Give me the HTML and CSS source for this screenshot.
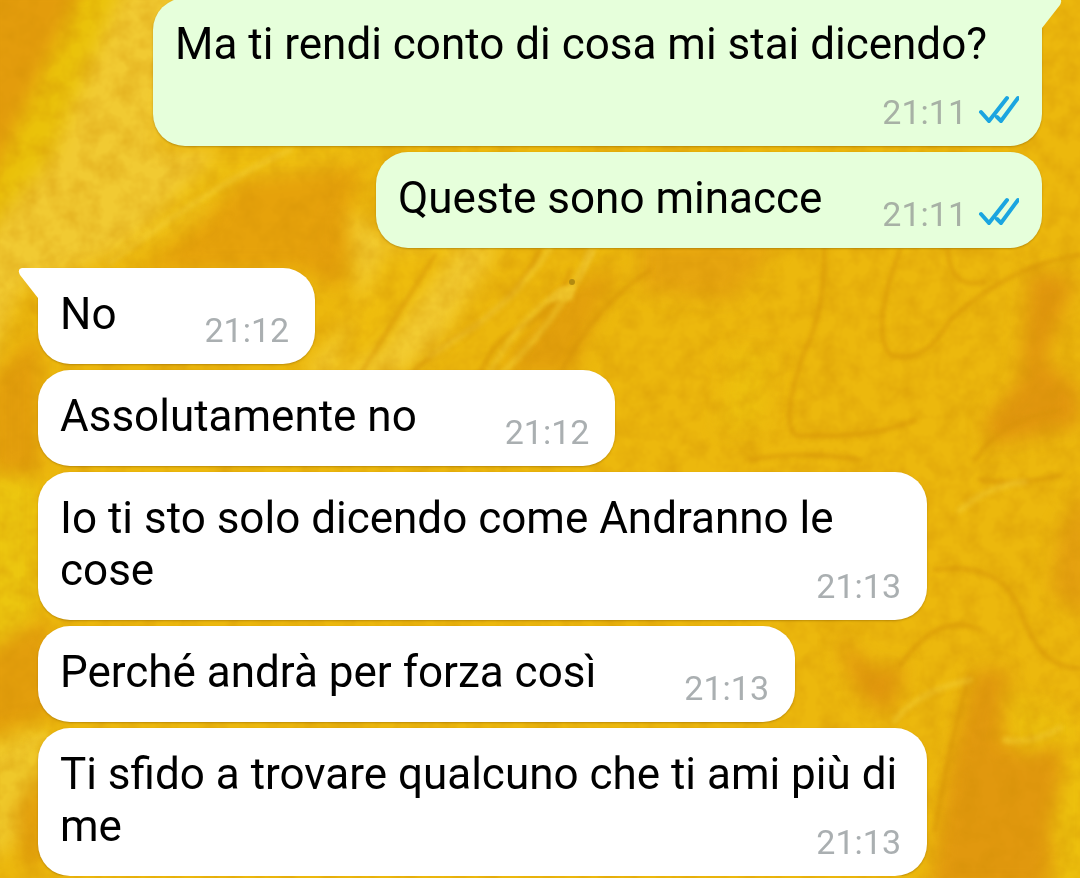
FILE: index.html
```html
<!DOCTYPE html>
<html lang="it">
<head>
    <meta charset="UTF-8">
    <meta name="viewport" content="width=device-width, initial-scale=1.0">
    <title>Chat</title>
    <link rel="stylesheet" href="styles.css">
</head>
<body>
    <!-- Marbled paint wallpaper -->
    <svg class="wallpaper" viewBox="0 0 1080 878" preserveAspectRatio="xMidYMid slice" aria-hidden="true">
        <defs>
            <filter id="soft" x="-20%" y="-20%" width="140%" height="140%" color-interpolation-filters="sRGB">
                <feGaussianBlur stdDeviation="9"/>
            </filter>
            <filter id="vein" x="-20%" y="-20%" width="140%" height="140%" color-interpolation-filters="sRGB">
                <feGaussianBlur stdDeviation="2"/>
            </filter>
            <filter id="grain" color-interpolation-filters="sRGB">
                <feTurbulence type="fractalNoise" baseFrequency="0.05" numOctaves="3" seed="4"/>
                <feColorMatrix values="0 0 0 0 0.82  0 0 0 0 0.56  0 0 0 0 0.02  0.7 0 0 0 -0.24"/>
            </filter>
        </defs>
        <rect width="1080" height="878" fill="#ecb80d"/>
        <g filter="url(#soft)">
            <path fill="#e39c0c" d="M-20 -20H80L75 60L40 150L-20 210Z"/>
            <path fill="#eac20a" d="M85 -20H150L60 150L-20 250V205Z"/>
            <path fill="#f1ca32" d="M125 -20H180L160 150H300L150 240L20 290L-20 390V240L50 160Z"/>
            <path fill="#eec010" d="M220 150H380L330 175L200 205L110 262L150 225Z"/>
            <path fill="#e6a20b" d="M360 165L240 180L200 225L140 270H330L350 210Z"/>
            <path fill="#f2cb31" d="M350 210L390 240L500 245L440 340L400 375L300 375L360 310Z"/>
            <path fill="#eebc0d" d="M385 250L460 245L380 350L330 375Z"/>
            <path fill="#e49f0b" d="M305 270L340 290L350 240L330 190Z"/>
            <path fill="#e3a00c" d="M560 290L620 265L570 375L500 375Z"/>
            <path fill="#e6a50f" d="M640 240H780L730 300L640 290Z"/>
            <path fill="#e39e0c" d="M-10 380L40 330V470L-10 480Z"/>
            <path fill="#ecc60f" d="M-20 470L40 480V620L-20 680Z"/>
            <path fill="#e39e0c" d="M-20 655L45 615L60 710L-20 740Z"/>
            <path fill="#efc82a" d="M-20 745L45 728V780L10 850L-20 860Z"/>
            <path fill="#e39e0c" d="M15 810L45 770V860L25 870Z"/>
            <path fill="#ecbf0d" d="M730 350H775L760 430H720Z"/>
            <path fill="#e1960e" d="M1030 270L1075 280L1045 360L1080 390V425L990 445L985 420L1020 380Z"/>
            <path fill="#e4a010" d="M1060 530L1090 480V620L1050 590Z"/>
            <path fill="#e1960e" d="M835 635L875 670L905 665L890 715L860 695Z"/>
            <path fill="#e1980e" d="M975 670L1010 670L1000 745L1060 740L1065 810L1045 890H930L950 760Z"/>
            <path fill="#ecc00d" d="M1000 690L1080 720V740L1020 755Z"/>
            <path fill="#ecc00d" d="M1068 750H1090V890H1060L1050 830Z"/>
        </g>
        <g fill="none" filter="url(#vein)" stroke-linecap="round">
            <g stroke="#d59108" stroke-width="4" opacity="0.6">
                <path d="M435 255Q400 310 360 375"/>
                <path d="M540 250Q510 310 450 340Q420 365 410 375"/>
                <path d="M570 270Q560 310 515 330Q490 345 480 375"/>
                <path d="M650 270Q590 310 560 375"/>
                <path d="M824 240Q826 310 805 350Q780 420 795 435Q870 440 915 420"/>
                <path d="M900 250Q870 330 890 355Q925 365 950 320Q1010 265 1080 255"/>
                <path d="M948 250Q950 290 985 282"/>
                <path d="M750 460Q800 450 860 460"/>
                <path d="M980 480Q1030 485 1060 475"/>
                <path d="M935 570Q1000 560 1020 610Q1040 670 1080 668"/>
                <path d="M900 665Q940 610 980 630"/>
                <path d="M970 675Q950 740 935 830"/>
                <path d="M1060 410Q1000 420 975 460"/>
            </g>
            <g stroke="#f2cb30" stroke-width="6" opacity="0.6">
                <path d="M290 150Q220 180 110 262"/>
                <path d="M550 248Q510 310 430 355"/>
                <path d="M590 250Q560 320 500 375"/>
                <path d="M565 290Q525 310 490 372"/>
                <path d="M960 510Q990 485 1025 482"/>
                <path d="M895 720Q920 690 970 680"/>
                <path d="M1005 740Q1030 745 1060 728"/>
                <path d="M45 735L0 765"/>
            </g>
        </g>
        <path fill="#f0c62c" filter="url(#vein)" d="M578 285L560 288L545 302L572 300L588 250H597Z"/>
        <circle cx="572" cy="282" r="3" fill="#b28a10"/>
        <rect width="1080" height="878" filter="url(#grain)"/>
    </svg>

    <main class="chat">
        <div class="message sent first">
            <svg class="tail" viewBox="0 0 20 30" aria-hidden="true"><path d="M0 0H16Q21 1 18 7L0 30Z"/></svg>
            <span class="text">Ma ti rendi conto di cosa mi stai dicendo?</span>
            <span class="meta">
                <time>21:11</time>
                <svg class="ticks" viewBox="0 0 42 28" role="img" aria-label="Letto"><path d="M4 17L12 26L30 3M20 22L24 26L41 3"/></svg>
            </span>
        </div>
        <div class="message sent">
            <span class="text">Queste sono minacce</span>
            <span class="meta">
                <time>21:11</time>
                <svg class="ticks" viewBox="0 0 42 28" role="img" aria-label="Letto"><path d="M4 17L12 26L30 3M20 22L24 26L41 3"/></svg>
            </span>
        </div>

        <div class="message received first">
            <svg class="tail" viewBox="0 0 20 30" aria-hidden="true"><path d="M20 0H4Q-1 1 2 7L20 30Z"/></svg>
            <span class="text">No</span>
            <span class="meta"><time>21:12</time></span>
        </div>
        <div class="message received">
            <span class="text">Assolutamente no</span>
            <span class="meta"><time>21:12</time></span>
        </div>
        <div class="message received">
            <span class="text">Io ti sto solo dicendo come Andranno le cose</span>
            <span class="meta"><time>21:13</time></span>
        </div>
        <div class="message received">
            <span class="text">Perché andrà per forza così</span>
            <span class="meta"><time>21:13</time></span>
        </div>
        <div class="message received">
            <span class="text">Ti sfido a trovare qualcuno che ti ami più di me</span>
            <span class="meta"><time>21:13</time></span>
        </div>
    </main>
</body>
</html>
```
FILE: styles.css
```css
* {
    box-sizing: border-box;
}

body {
    margin: 0;
    background-color: #eab50d;
    font-family: Roboto, "Liberation Sans", sans-serif;
    overflow-x: hidden;
}

.wallpaper {
    position: fixed;
    inset: 0;
    width: 100%;
    height: 100%;
    z-index: -1;
}

/* the list is scrolled slightly past the first bubble's top edge */
.chat {
    display: flex;
    flex-direction: column;
    gap: 6px;
    margin-top: -2px;
    padding: 0 38px;
}

.message {
    position: relative;
    display: flow-root;
    max-width: calc(100% - 115px);
    padding: 20px 23px 14px 22px;
    border-radius: 32px;
    box-shadow: 0 1px 2px rgba(120, 80, 0, 0.4);
    font-size: 44px;
    line-height: 52px;
    color: #000;
}

.sent {
    align-self: flex-end;
    background-color: #e6ffdb;
}

.received {
    align-self: flex-start;
    background-color: #fff;
}

.sent.first {
    border-top-right-radius: 0;
}

.received.first {
    margin-top: 14px;
    border-top-left-radius: 0;
}

/* time sits beside the last line, or drops below when it does not fit */
.meta {
    float: right;
    display: flex;
    align-items: center;
    gap: 10px;
    margin: 22px 3px 0 88px;
    font-size: 34px;
    line-height: 40px;
    color: #aaafb1;
}

.sent .meta {
    margin-left: 60px;
    margin-right: 0;
    color: #a7b1a5;
}

.ticks {
    width: 42px;
    height: 28px;
    margin-bottom: 6px;
    fill: none;
    stroke: #1ba5e0;
    stroke-width: 4;
    stroke-linecap: round;
}

.tail {
    position: absolute;
    top: 0;
    width: 20px;
    height: 30px;
}

.sent .tail {
    left: 100%;
    fill: #e6ffdb;
}

.received .tail {
    right: 100%;
    fill: #fff;
}
```
